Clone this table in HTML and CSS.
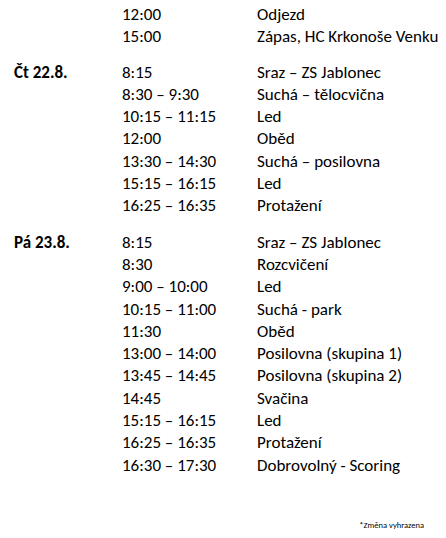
FILE: index.html
```html
<!DOCTYPE html>
<html lang="cs">
<head>
<meta charset="utf-8">
<link rel="stylesheet" href="styles.css">
</head>
<body>
<div class="page">
  <div class="day">
    <div class="label"></div>
    <div class="rows">
      <div class="row"><span class="time">12:00</span><span class="act">Odjezd</span></div>
      <div class="row"><span class="time">15:00</span><span class="act">Zápas, HC Krkonoše Venku</span></div>
    </div>
  </div>
  <div class="day">
    <div class="label">Čt 22.8.</div>
    <div class="rows">
      <div class="row"><span class="time">8:15</span><span class="act">Sraz – ZS Jablonec</span></div>
      <div class="row"><span class="time">8:30 – 9:30</span><span class="act">Suchá – tělocvična</span></div>
      <div class="row"><span class="time">10:15 – 11:15</span><span class="act">Led</span></div>
      <div class="row"><span class="time">12:00</span><span class="act">Oběd</span></div>
      <div class="row"><span class="time">13:30 – 14:30</span><span class="act">Suchá – posilovna</span></div>
      <div class="row"><span class="time">15:15 – 16:15</span><span class="act">Led</span></div>
      <div class="row"><span class="time">16:25 – 16:35</span><span class="act">Protažení</span></div>
    </div>
  </div>
  <div class="day">
    <div class="label">Pá 23.8.</div>
    <div class="rows">
      <div class="row"><span class="time">8:15</span><span class="act">Sraz – ZS Jablonec</span></div>
      <div class="row"><span class="time">8:30</span><span class="act">Rozcvičení</span></div>
      <div class="row"><span class="time">9:00 – 10:00</span><span class="act">Led</span></div>
      <div class="row"><span class="time">10:15 – 11:00</span><span class="act">Suchá - park</span></div>
      <div class="row"><span class="time">11:30</span><span class="act">Oběd</span></div>
      <div class="row"><span class="time">13:00 – 14:00</span><span class="act">Posilovna (skupina 1)</span></div>
      <div class="row"><span class="time">13:45 – 14:45</span><span class="act">Posilovna (skupina 2)</span></div>
      <div class="row"><span class="time">14:45</span><span class="act">Svačina</span></div>
      <div class="row"><span class="time">15:15 – 16:15</span><span class="act">Led</span></div>
      <div class="row"><span class="time">16:25 – 16:35</span><span class="act">Protažení</span></div>
      <div class="row"><span class="time">16:30 – 17:30</span><span class="act">Dobrovolný - Scoring</span></div>
    </div>
  </div>
  <div class="note">*Změna vyhrazena</div>
</div>
</body>
</html>
```

FILE: styles.css
```css
html, body {
  margin: 0;
  padding: 0;
  background: #ffffff;
}
body {
  width: 446px;
  height: 538px;
  overflow: hidden;
  font-family: Carlito, Lato, "Open Sans", sans-serif;
  color: #000000;
}
.page {
  padding: 4px 0 0 14px;
  display: flex;
  flex-direction: column;
}
.day {
  display: flex;
  margin-bottom: 14px;
}
.day:first-child {
  margin-bottom: 13px;
}
.label {
  width: 108px;
  flex: none;
  font-weight: 800;
  font-size: 17px;
  line-height: 22.3px;
}
.rows {
  display: flex;
  flex-direction: column;
}
.row {
  display: flex;
  font-size: 17px;
  line-height: 22.3px;
  white-space: nowrap;
}
.time {
  width: 135px;
  flex: none;
}
.note {
  align-self: flex-end;
  margin: 29px 22px 0 0;
  font-size: 8.5px;
  line-height: 10px;
}
```
